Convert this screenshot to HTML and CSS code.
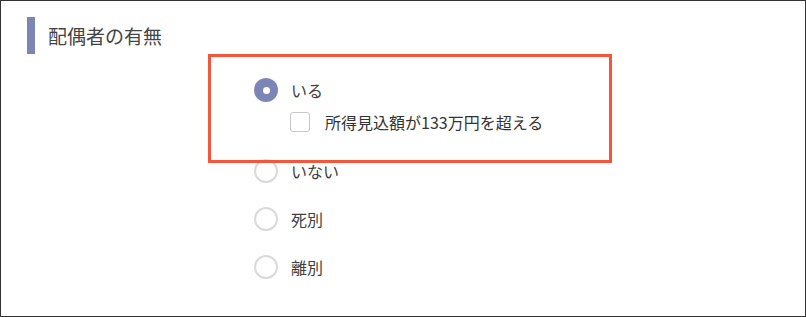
FILE: index.html
```html
<!DOCTYPE html>
<html lang="ja">
<head>
<meta charset="utf-8">
<title>配偶者の有無</title>
<link rel="stylesheet" href="styles.css">
</head>
<body>
<div class="frame">
  <div class="heading">
    <span class="heading-bar"></span>
    <h2 class="heading-text">配偶者の有無</h2>
  </div>
  <div class="options">
    <label class="option option-first">
      <span class="radio radio-checked"><span class="radio-dot"></span></span>
      <span class="option-label">いる</span>
    </label>
    <label class="sub-option">
      <span class="checkbox"></span>
      <span class="sub-label">所得見込額が133万円を超える</span>
    </label>
    <label class="option option-after-sub">
      <span class="radio"></span>
      <span class="option-label">いない</span>
    </label>
    <label class="option">
      <span class="radio"></span>
      <span class="option-label">死別</span>
    </label>
    <label class="option">
      <span class="radio"></span>
      <span class="option-label">離別</span>
    </label>
  </div>
  <div class="highlight"></div>
</div>
</body>
</html>
```
FILE: styles.css
```css
* { box-sizing: border-box; }

html, body {
  margin: 0;
  padding: 0;
  background: #fff;
}

body {
  font-family: "Noto Sans CJK JP", "Noto Sans", sans-serif;
  color: #3a3a3a;
}

.frame {
  position: relative;
  width: 806px;
  height: 317px;
  border: 1px solid #333;
  background: #fff;
}

.heading {
  display: flex;
  align-items: center;
  margin: 16px 0 0 26px;
}

.heading-bar {
  width: 8px;
  height: 37px;
  background: #7c86b6;
  flex: none;
}

.heading-text {
  margin: 0 0 0 13px;
  font-size: 19px;
  font-weight: normal;
  color: #444;
  line-height: 24px;
}

.options {
  display: flex;
  flex-direction: column;
  margin: 24px 0 0 253px;
}

.option {
  display: flex;
  align-items: center;
  height: 24px;
  margin-top: 24px;
}

.option-first { margin-top: 0; }
.option-after-sub { margin-top: 27px; }

.radio {
  width: 24px;
  height: 24px;
  border-radius: 50%;
  border: 2px solid #dadada;
  background: #fff;
  flex: none;
  display: flex;
  align-items: center;
  justify-content: center;
}

.radio-checked {
  border: none;
  background: #7c86b6;
}

.radio-dot {
  width: 7px;
  height: 7px;
  border-radius: 50%;
  background: #fff;
}

.option-label {
  margin-left: 13px;
  font-size: 16px;
  line-height: 24px;
  color: #404040;
}

.sub-option {
  display: flex;
  align-items: center;
  height: 20px;
  margin: 10px 0 0 36px;
}

.checkbox {
  width: 20px;
  height: 20px;
  border: 1px solid #c9c9c9;
  border-radius: 3px;
  background: #fff;
  flex: none;
}

.sub-label {
  margin-left: 15px;
  font-size: 16px;
  line-height: 20px;
  color: #333;
}

.highlight {
  position: absolute;
  left: 207px;
  top: 53px;
  width: 404px;
  height: 109px;
  border: 3px solid #f4563c;
  pointer-events: none;
}
```
